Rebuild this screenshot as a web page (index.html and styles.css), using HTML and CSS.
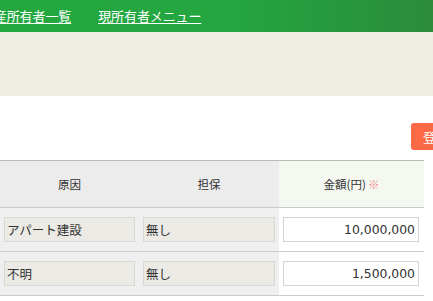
FILE: index.html
```html
<!DOCTYPE html>
<html lang="ja">
<head>
  <meta charset="UTF-8" />
  <meta name="viewport" content="width=device-width, initial-scale=1" />
  <title>現所有者メニュー</title>
  <link rel="stylesheet" href="styles.css">
</head>
<body>
  <header class="topbar">
    <nav class="nav">
      <a href="#">不動産所有者一覧</a>
      <a href="#">現所有者メニュー</a>
    </nav>
  </header>

  <div class="band"></div>

  <main class="page">
    <div class="toolbar">
      <button class="saveBtn">登録</button>
    </div>

    <table class="debts">
      <thead>
        <tr>
          <th class="c1">原因</th>
          <th class="c2">担保</th>
          <th class="c3">金額(円)<span class="req">※</span></th>
        </tr>
      </thead>
      <tbody>
        <tr>
          <td class="c1"><input class="ro" type="text" value="アパート建設" readonly /></td>
          <td class="c2"><input class="ro" type="text" value="無し" readonly /></td>
          <td class="c3"><input class="num" type="text" value="10,000,000" /></td>
        </tr>
        <tr>
          <td class="c1"><input class="ro" type="text" value="不明" readonly /></td>
          <td class="c2"><input class="ro" type="text" value="無し" readonly /></td>
          <td class="c3"><input class="num" type="text" value="1,500,000" /></td>
        </tr>
      </tbody>
    </table>
  </main>
</body>
</html>
```

FILE: styles.css
```css
/* RESET */
* { margin:0; padding:0; box-sizing:border-box }
html, body { width:100%; height:100%; overflow:hidden }
body {
  font-family:"DejaVu Sans","Noto Sans CJK JP",sans-serif;
  background:#fff; color:#333;
}

/* header */
.topbar {
  height:32px;
  background:linear-gradient(90deg,#23a83f 0%,#24a540 55%,#2b8b3a 100%);
  display:flex; align-items:center;
}
.nav { display:flex; gap:27px; margin-left:-32px; margin-top:-1px }
.nav a {
  color:#fff; font-family:"Noto Sans CJK JP",sans-serif;
  font-size:13px; letter-spacing:-0.1px;
  text-decoration:underline; text-underline-offset:2px;
}

.band { height:64px; background:#f0ede2 }

.page { width:480px }
.toolbar {
  display:flex; justify-content:flex-start;
  padding:27px 0 10px 411px;
}
.saveBtn {
  width:50px; height:27px;
  background:#fb6a45; color:#fff; border:none; border-radius:3px;
  font-family:"Noto Sans CJK JP",sans-serif; font-size:13px;
  text-align:left; padding-left:12px;
}

/* table */
.debts {
  width:424px; border-collapse:collapse; table-layout:fixed;
  border-top:1px solid #b7bcb7;
}
.debts th, .debts td { border-bottom:1px solid #c9ccc9 }
.debts th {
  height:47px; font-weight:normal; font-size:11.5px; color:#333;
  font-family:"Noto Sans CJK JP",sans-serif;
  background:#ececec;
}
.debts th.c3 { background:#f4f8f1 }
.debts .c1 { width:139px }
.debts .c2 { width:140px }
.debts .c3 { width:145px }
.req { color:#f28a8a; margin-left:2px }

.debts td { height:44px; padding:0 4px; background:#efefef }
.debts td.c3 { background:#fff; padding:0 5px 0 4px }

.debts input {
  display:block; width:100%; height:25px;
  font-family:"DejaVu Sans","Noto Sans CJK JP",sans-serif;
  font-size:12.4px; color:#333; outline:none;
}
.ro {
  background:#ebeae5; border:1px solid #d8d8d5;
  padding:0 2px;
}
.debts input.ro { font-family:"Noto Sans CJK JP",sans-serif; font-size:12.5px }
.num {
  background:#fff; border:1px solid #d3d3d3;
  text-align:right; padding:0 3px;
}
```
